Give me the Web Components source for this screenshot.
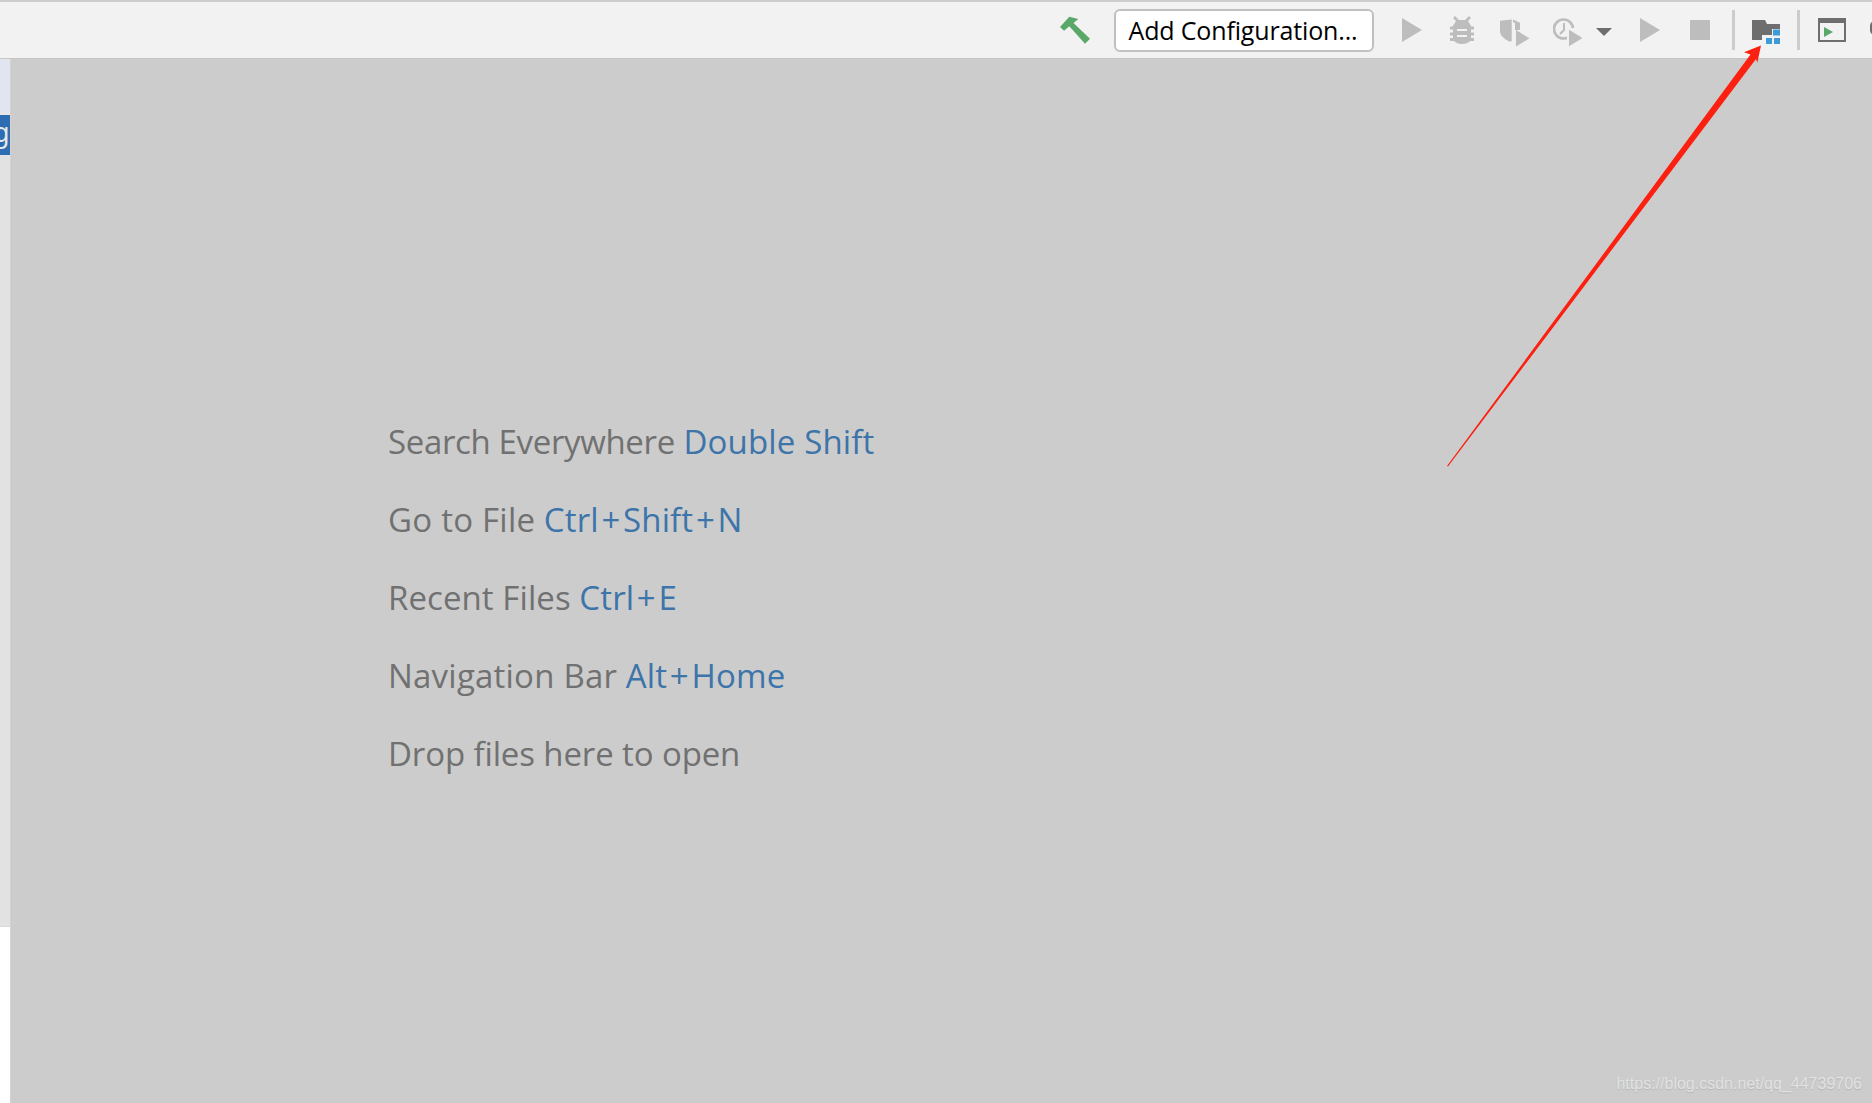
<!DOCTYPE html>
<html>
<head>
<meta charset="utf-8">
<title>IDE welcome</title>
<style>
  html, body { margin: 0; height: 100%; }
  body { display: flex; flex-direction: column; height: 1103px; overflow: hidden; background: #cccccc; }
</style>
</head>
<body>
  <ide-toolbar>
    <tb-icon name="hammer" w="32"></tb-icon>
    <config-button style="margin-left:22px">Add Configuration...</config-button>
    <tb-icon name="play" w="20" style="margin-left:28px"></tb-icon>
    <tb-icon name="bug" w="24" style="margin-left:28px"></tb-icon>
    <tb-icon name="coverage" w="30" style="margin-left:26px"></tb-icon>
    <tb-icon name="profiler" w="31" style="margin-left:23px"></tb-icon>
    <tb-icon name="caret" w="16" style="margin-left:12px"></tb-icon>
    <tb-icon name="play" w="20" style="margin-left:28px"></tb-icon>
    <tb-icon name="stop" w="20" style="margin-left:30px"></tb-icon>
    <tb-sep style="margin-left:22px"></tb-sep>
    <tb-icon name="structure" w="28" style="margin-left:17px"></tb-icon>
    <tb-sep style="margin-left:17px"></tb-sep>
    <tb-icon name="runwindow" w="28" style="margin-left:18px"></tb-icon>
    <tb-icon name="search" w="12" style="margin-left:24px"></tb-icon>
  </ide-toolbar>
  <ide-body>
    <side-rail slot="rail"></side-rail>
    <hint-line key="Double Shift" track="-0.35">Search Everywhere</hint-line>
    <hint-line key="Ctrl+Shift+N" track="0.24">Go to File</hint-line>
    <hint-line key="Ctrl+E" track="0.08">Recent Files</hint-line>
    <hint-line key="Alt+Home" track="0.22">Navigation Bar</hint-line>
    <hint-line track="-0.12">Drop files here to open</hint-line>
  </ide-body>
  <red-arrow></red-arrow>
  <water-mark>https://blog.csdn.net/qq_44739706</water-mark>

<script>
// toolbar strip across the top
class IdeToolbar extends HTMLElement {
  constructor () {
    super();
    const root = this.attachShadow({ mode: 'open' });
    root.innerHTML = `
      <style>
        :host { display: flex; align-items: center; box-sizing: border-box; height: 59px; flex: none;
          border-top: 2px solid #cdcdcd; border-bottom: 1px solid #c6c6c6; background: #f2f2f2;
          padding-left: 1060px; overflow: hidden; }
      </style>
      <slot></slot>`;
  }
}
customElements.define('ide-toolbar', IdeToolbar);

// every icon is drawn in its real pixels, 44px tall, width from the w attribute
const ICONS = {
  hammer: `<path fill="#59a869" d="M0 19 L9.3 8.7 L18.3 11 L13.5 15 L30 30.7 L25 35.7 L9.3 18.3 L4 22.7Z"/>`,
  play: `<path fill="#bdbdbd" d="M0 10 L20 22 L0 34Z"/>`,
  bug: `<g fill="#bdbdbd">
      <path d="M5 8 L9 12 H15 L19 8 L21 10 L18 13 L21 18 H3 L6 13 L3 10Z"/>
      <path d="M3 17 H21 V32 Q18 36 12 36 Q6 36 3 32Z"/>
      <path d="M0 18.5 H24 V21.5 H0Z M0 24.5 H24 V27.5 H0Z M0 30 H24 V33 H0Z"/>
    </g>
    <path fill="#f2f2f2" d="M7 21 H17 V23 H7Z M7 27 H17 V29 H7Z"/>`,
  coverage: `<g fill="#bdbdbd">
      <path d="M0 12.7 L11.7 11.5 V33 L10 33.7 Q1 30 0 24Z"/>
      <path d="M13 11.5 L20 14.7 V22 H15 V15 L13 14Z"/>
      <path d="M16 22 L29.5 30.3 L16 38.5Z"/>
    </g>`,
  profiler: `<circle cx="10.5" cy="21" r="9.5" fill="none" stroke="#bdbdbd" stroke-width="2.6"/>
    <path fill="none" stroke="#bdbdbd" stroke-width="2" d="M11 15 V22 L7 26"/>
    <path fill="#f2f2f2" d="M14 20 H31 V40 H14Z"/>
    <path fill="#bdbdbd" d="M16 21.7 L29.5 30 L16 38.3Z"/>`,
  caret: `<path fill="#6e6e6e" d="M0 20 H16 L8 28Z"/>`,
  stop: `<rect x="0" y="12" width="20" height="20" fill="#bdbdbd"/>`,
  structure: `<path fill="#6e6e6e" d="M0 12 H13 L15 16 H28 V21 H20 V27 H10 V32 H0Z"/>
    <path fill="#3d9bd8" d="M21 21.5 H28 V27.5 H21Z M14 30 H20 V36 H14Z M22 30 H28 V36 H22Z"/>`,
  runwindow: `<path fill="#6e6e6e" d="M0 10 H28 V34 H0Z"/>
    <path fill="#f2f2f2" d="M2 15 H26 V32 H2Z"/>
    <path fill="#59a869" d="M6 19 L15 24 L6 29Z"/>`,
  search: `<circle cx="8.5" cy="20" r="7.5" fill="none" stroke="#6e6e6e" stroke-width="3"/>`
};

class TbIcon extends HTMLElement {
  constructor () {
    super();
    this.attachShadow({ mode: 'open' });
  }
  connectedCallback () {
    const w = this.getAttribute('w');
    this.shadowRoot.innerHTML = `
      <style>
        :host { display: block; flex: none; height: 44px; }
        svg { display: block; overflow: hidden; }
      </style>
      <svg width="${w}" height="44" viewBox="0 0 ${w} 44">${ICONS[this.getAttribute('name')]}</svg>`;
  }
}
customElements.define('tb-icon', TbIcon);

class TbSep extends HTMLElement {
  constructor () {
    super();
    const root = this.attachShadow({ mode: 'open' });
    root.innerHTML = `
      <style>
        :host { display: block; flex: none; width: 3px; height: 40px; background: #cccccc; }
      </style>`;
  }
}
customElements.define('tb-sep', TbSep);

class ConfigButton extends HTMLElement {
  constructor () {
    super();
    const root = this.attachShadow({ mode: 'open' });
    root.innerHTML = `
      <style>
        :host { display: flex; align-items: center; justify-content: center; flex: none; box-sizing: border-box;
          width: 260px; height: 43px; padding-right: 2px; background: #fff; border: 2px solid #c0c0c0; border-radius: 6px;
          font: 25px "Open Sans", sans-serif; letter-spacing: -0.15px; color: #000; white-space: nowrap; }
      </style>
      <slot></slot>`;
  }
}
customElements.define('config-button', ConfigButton);

// grey editor area, rail on the left and the hints in the flow
class IdeBody extends HTMLElement {
  constructor () {
    super();
    const root = this.attachShadow({ mode: 'open' });
    root.innerHTML = `
      <style>
        :host { display: flex; flex: 1; min-height: 0; }
        main { flex: 1; display: flex; flex-direction: column; padding: 344px 0 0 377px; background: #cccccc; }
      </style>
      <slot name="rail"></slot>
      <main><slot></slot></main>`;
  }
}
customElements.define('ide-body', IdeBody);

class SideRail extends HTMLElement {
  constructor () {
    super();
    const root = this.attachShadow({ mode: 'open' });
    root.innerHTML = `
      <style>
        :host { display: flex; flex-direction: column; flex: none; box-sizing: content-box; width: 10px;
          border-right: 1px solid #d2d2d2; background: #fff; }
        .top { height: 53px; background: #e1e5ef; border-bottom: 3px solid #e6e6e6; }
        .sel { height: 40px; background: #2f6db3; overflow: hidden; color: #e8e8e8;
          font: 27px/33px "Noto Sans", sans-serif; }
        .sel span { display: block; margin-left: -7px; }
        .rest { height: 771px; background: #e2e2e2; border-bottom: 1px solid #d8d8d8; }
      </style>
      <div class="top"></div>
      <div class="sel"><span>g</span></div>
      <div class="rest"></div>`;
  }
}
customElements.define('side-rail', SideRail);

class HintLine extends HTMLElement {
  constructor () {
    super();
    this.attachShadow({ mode: 'open' });
  }
  connectedCallback () {
    const key = this.getAttribute('key');
    const track = this.getAttribute('track') || 0;
    // the plus signs sit wider apart in the reference than this font sets them
    const keyHtml = key ? key.split('+').join('<i>+</i>') : '';
    this.shadowRoot.innerHTML = `
      <style>
        :host { display: block; height: 78px; font: 33px/78px "Open Sans", sans-serif; color: #717171; white-space: nowrap; }
        span { letter-spacing: ${track}px; }
        b { font-weight: 400; color: #3d74a9; letter-spacing: 0.15px; }
        i { font-style: normal; margin: 0 2.6px; }
      </style>
      <span><slot></slot></span>${key ? ` <b>${keyHtml}</b>` : ''}`;
  }
}
customElements.define('hint-line', HintLine);

// the red annotation drawn over the screenshot
class RedArrow extends HTMLElement {
  constructor () {
    super();
    const root = this.attachShadow({ mode: 'open' });
    root.innerHTML = `
      <style>
        :host { position: absolute; left: 0; top: 0; width: 1872px; height: 1103px; pointer-events: none; }
      </style>
      <svg width="1872" height="1103" viewBox="0 0 1872 1103">
        <path fill="#fb2010" d="M1447 466 L1750.5 54.5 L1744 52.3 L1761 45.5 L1757.3 62.7 L1756 59 L1448 466.5Z"/>
      </svg>`;
  }
}
customElements.define('red-arrow', RedArrow);

class WaterMark extends HTMLElement {
  constructor () {
    super();
    const root = this.attachShadow({ mode: 'open' });
    root.innerHTML = `
      <style>
        :host { position: absolute; right: 10px; bottom: 8px; font: 16px/22px "Liberation Sans", sans-serif;
          color: #e2e2e2; text-shadow: 0 1px 1px #b4b4b4; white-space: nowrap; }
      </style>
      <slot></slot>`;
  }
}
customElements.define('water-mark', WaterMark);
</script>
</body>
</html>
